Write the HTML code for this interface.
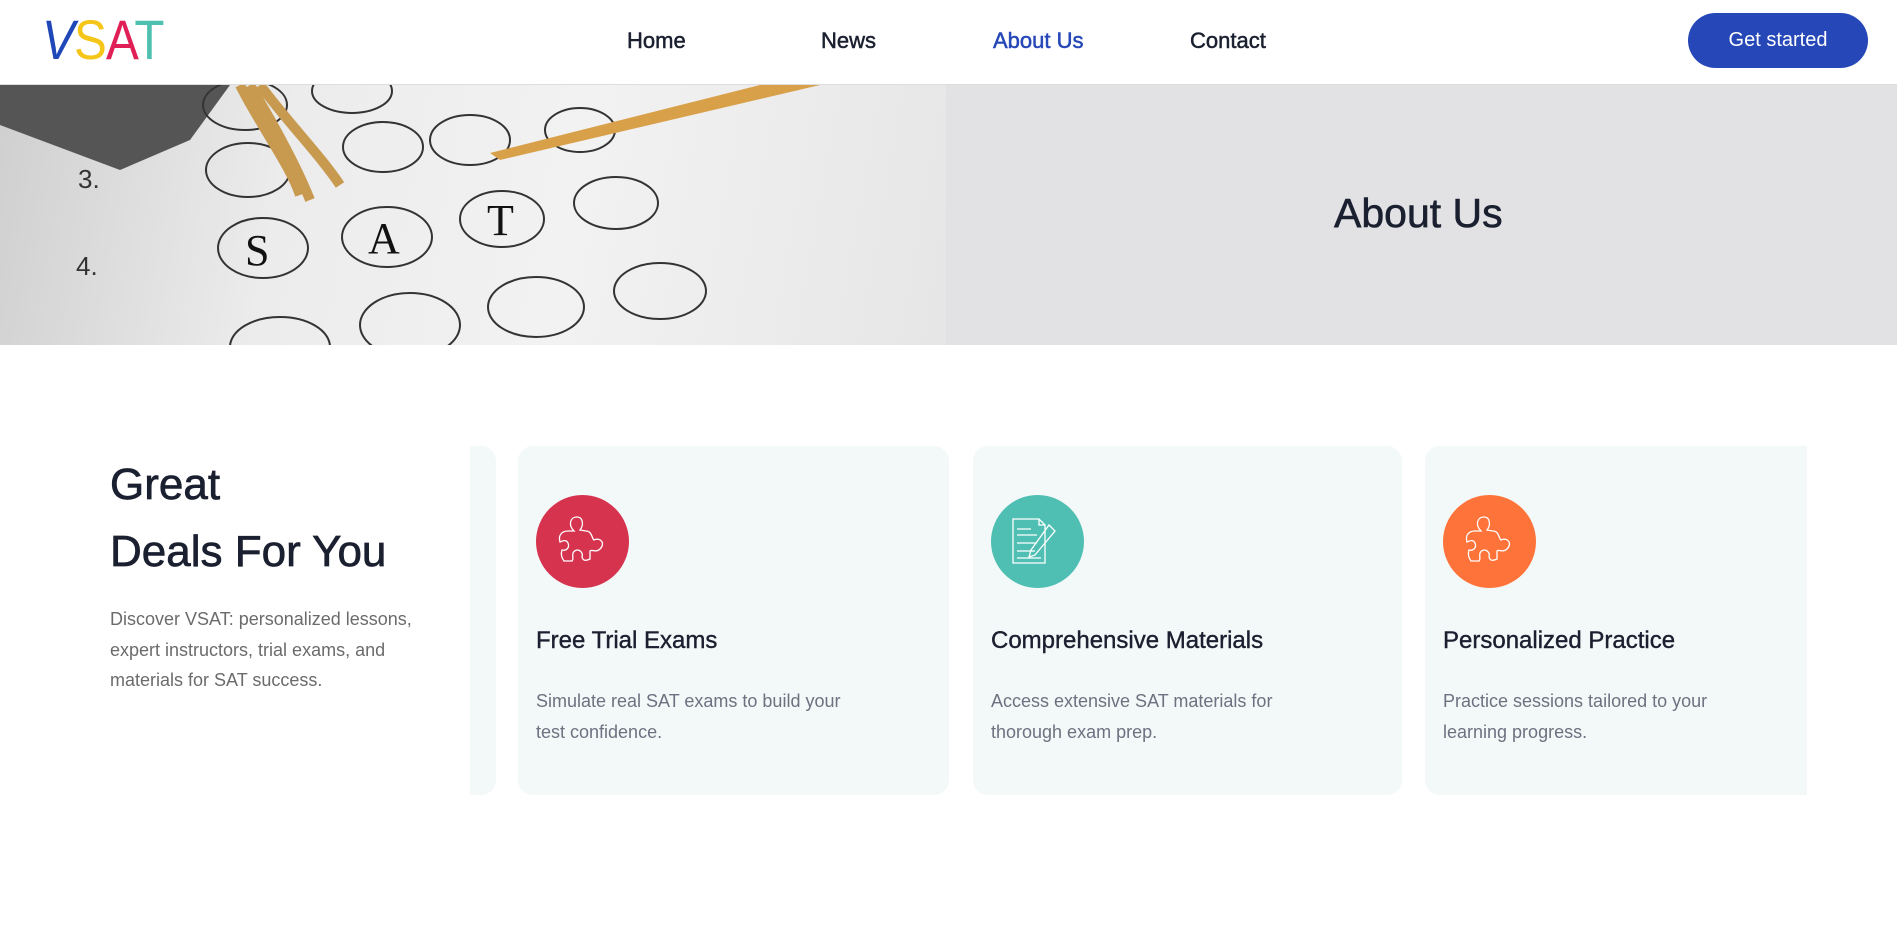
<!DOCTYPE html>
<html><head><meta charset="utf-8"><style>
*{margin:0;padding:0;box-sizing:border-box}
body{width:1897px;height:936px;overflow:hidden;background:#fff;font-family:"Liberation Sans",sans-serif;color:#1b2030;position:relative}
.hdr{position:absolute;left:0;top:0;width:1897px;height:85px;background:#fff;border-bottom:1px solid #ddd}
.logo{position:absolute;left:42px;top:12px;font-size:56px;font-weight:400;letter-spacing:-1px;line-height:56px;transform:scaleX(0.88);transform-origin:left}
.nav{position:absolute;top:28px;font-size:22px;font-weight:400;color:#1b2030;-webkit-text-stroke:0.5px currentColor}
.btn{position:absolute;left:1688px;top:13px;width:180px;height:55px;border-radius:28px;background:#2647b8;color:#fff;font-size:20px;text-align:center;line-height:55px}
.hero{position:absolute;left:0;top:85px;width:1897px;height:260px;background:#e2e2e4}
.hero h1{position:absolute;left:1334px;top:105px;font-size:41px;font-weight:400;color:#1b2030;-webkit-text-stroke:0.6px #1b2030}
.img{position:absolute;left:0;top:0;width:946px;height:260px;overflow:hidden;background:linear-gradient(100deg,#cfcfcf 0%,#ececec 30%,#f2f2f2 60%,#e6e6e6 100%)}
.h2{position:absolute;left:110px;top:451px;font-size:44px;line-height:67px;font-weight:400;-webkit-text-stroke:0.7px #1b2030}
.p{position:absolute;left:110px;top:604px;width:330px;font-size:18px;line-height:30.5px;color:#6b6b6b}
.card{position:absolute;top:446px;height:349px;background:#f3f9f9;border-radius:15px}
.ic{position:absolute;left:18px;top:49px;width:93px;height:93px;border-radius:50%}
.ic svg{position:absolute;left:0;top:0}
.ct{position:absolute;left:18px;top:181px;font-size:24px;font-weight:400;white-space:nowrap;-webkit-text-stroke:0.4px #1b2030}
.cd{position:absolute;left:18px;top:240px;width:320px;font-size:18px;line-height:30.5px;color:#6b7280}
</style></head><body>
<div class="hdr">
<div class="logo"><span style="color:#1f47b8;font-style:italic">V</span><span style="color:#f5c518">S</span><span style="color:#e01f57">A</span><span style="color:#4fc0b0">T</span></div>
<div class="nav" style="left:627px">Home</div>
<div class="nav" style="left:821px">News</div>
<div class="nav" style="left:993px;color:#2647b8">About Us</div>
<div class="nav" style="left:1190px">Contact</div>
<div class="btn">Get started</div>
</div>
<div class="hero">
<div class="img"><svg width="946" height="260" viewBox="0 0 946 260" fill="none" stroke="#333" stroke-width="2">
<polygon points="0,0 230,0 190,55 120,85 0,40" fill="#555" stroke="none"/>
<ellipse cx="245" cy="20" rx="42" ry="25"/><ellipse cx="352" cy="6" rx="40" ry="22"/><ellipse cx="470" cy="55" rx="40" ry="25"/><ellipse cx="580" cy="45" rx="35" ry="22"/>
<ellipse cx="248" cy="85" rx="42" ry="27"/><ellipse cx="383" cy="62" rx="40" ry="25"/>
<ellipse cx="263" cy="163" rx="45" ry="30"/><ellipse cx="387" cy="152" rx="45" ry="30"/><ellipse cx="502" cy="134" rx="42" ry="28"/><ellipse cx="616" cy="118" rx="42" ry="26"/>
<ellipse cx="280" cy="262" rx="50" ry="30"/><ellipse cx="410" cy="240" rx="50" ry="32"/><ellipse cx="536" cy="222" rx="48" ry="30"/><ellipse cx="660" cy="206" rx="46" ry="28"/>
<polygon points="490,68 760,0 820,0 500,75" fill="#d9a04a" stroke="none"/>
<path d="M240 0 C260 40 290 80 300 110 M260 0 C290 40 320 70 340 100 M250 0 C280 50 300 90 310 115" stroke="#c89a50" stroke-width="10"/>
<text x="78" y="103" font-size="26" fill="#333" stroke="none" font-family="Liberation Sans">3.</text>
<text x="76" y="190" font-size="26" fill="#333" stroke="none" font-family="Liberation Sans">4.</text>
<text x="245" y="180" font-size="44" fill="#111" stroke="none" font-family="Liberation Serif">S</text>
<text x="368" y="168" font-size="44" fill="#111" stroke="none" font-family="Liberation Serif">A</text>
<text x="487" y="150" font-size="44" fill="#111" stroke="none" font-family="Liberation Serif">T</text>
</svg></div>
<h1>About Us</h1>
</div>
<div class="h2">Great<br>Deals For You</div>
<div class="p">Discover VSAT: personalized lessons, expert instructors, trial exams, and materials for SAT success.</div>
<div class="card" style="left:470px;width:26px;border-radius:0 15px 15px 0"></div>
<div class="card" style="left:518px;width:431px"><div class="ic" style="background:#d6334f"><svg width="93" height="93" viewBox="0 0 93 93" fill="none" stroke="#fff" stroke-width="1.3"><path d="M38 36 C32 30 34 22 41 22 C47 22 48 30 44 35 L50 36 C56 36 56 44 58 45 C64 42 70 48 64 54 C60 58 56 54 54 56 L54 64 C50 66 47 66 46 62 C48 56 40 52 37 58 C36 62 38 64 36 66 L28 66 C25 62 25 58 26 55 C30 56 34 53 32 48 C30 44 26 46 24 47 C22 40 26 36 32 36 Z"/></svg></div><div class="ct">Free Trial Exams</div><div class="cd">Simulate real SAT exams to build your test confidence.</div></div>
<div class="card" style="left:973px;width:429px"><div class="ic" style="background:#4fbfb3"><svg width="93" height="93" viewBox="0 0 93 93" fill="none" stroke="#fff" stroke-width="1.3"><path d="M22 24 L48 24 L54 30 L54 68 L22 68 Z M48 24 L48 30 L54 30 M26 34 L40 34 M26 40 L46 40 M26 48 L46 48 M26 56 L44 56 M26 63 L50 63 M58 30 L64 36 L44 60 L38 62 L40 55 Z"/></svg></div><div class="ct">Comprehensive Materials</div><div class="cd">Access extensive SAT materials for thorough exam prep.</div></div>
<div class="card" style="left:1425px;width:382px;border-radius:15px 0 0 15px"><div class="ic" style="background:#fe7339"><svg width="93" height="93" viewBox="0 0 93 93" fill="none" stroke="#fff" stroke-width="1.3"><path d="M38 36 C32 30 34 22 41 22 C47 22 48 30 44 35 L50 36 C56 36 56 44 58 45 C64 42 70 48 64 54 C60 58 56 54 54 56 L54 64 C50 66 47 66 46 62 C48 56 40 52 37 58 C36 62 38 64 36 66 L28 66 C25 62 25 58 26 55 C30 56 34 53 32 48 C30 44 26 46 24 47 C22 40 26 36 32 36 Z"/></svg></div><div class="ct">Personalized Practice</div><div class="cd">Practice sessions tailored to your learning progress.</div></div>
</body></html>
